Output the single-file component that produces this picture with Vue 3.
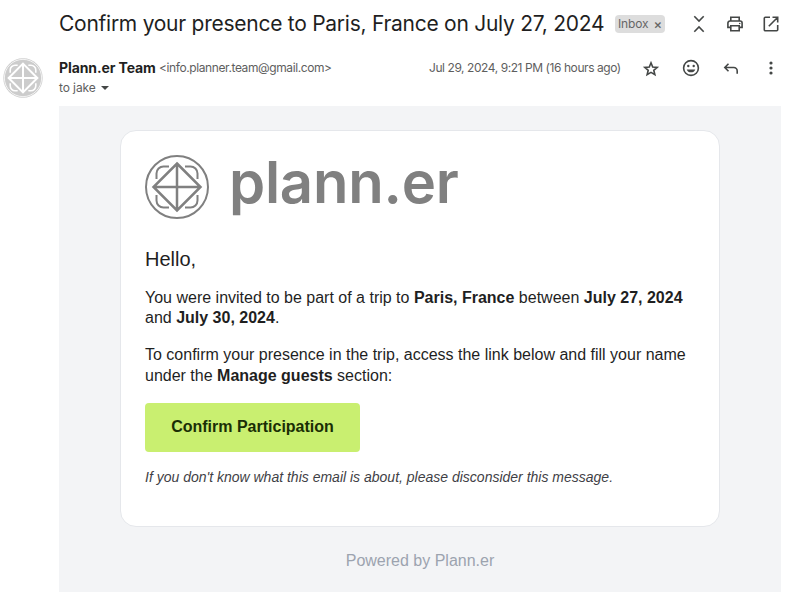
<script setup>
const logoCorners = [0, 90, 180, 270]
</script>

<template>
  <main class="mail">
    <header class="subject">
      <h1>Confirm your presence to Paris, France on July 27, 2024</h1>
      <span class="label">Inbox <b>×</b></span>
      <nav class="tools">
        <svg viewBox="0 0 20 20"><path d="M5.3 2.3 10 7l4.7-4.7M5.3 17.7 10 13l4.7 4.7" /></svg>
        <svg viewBox="0 0 20 20"><path d="M5.8 7V3.3h8.4V7M5.8 13.4H2.9V9a2 2 0 0 1 2-2h10.2a2 2 0 0 1 2 2v4.400h-2.900M5.800 11.700h8.400v5h-8.400z" /><circle class="solid" cx="14.700" cy="9.500" r=".8" /></svg>
        <svg viewBox="0 0 20 20"><path d="M9 3.300H4.300a1 1 0 0 0-1 1v11.400a1 1 0 0 0 1 1h11.400a1 1 0 0 0 1-1V11M11.500 3.300h5.200v5.200M16.500 3.500l-8.700 8.700" /></svg>
      </nav>
    </header>

    <section class="sender">
      <svg class="avatar" viewBox="-32 -32 64 64">
        <circle class="disc" r="31.500" />
        <circle class="ring" r="29.800" />
        <path class="mark" d="M0-23 23 0 0 23-23 0zM0-23V23M-23 0H23" />
        <path v-for="a in logoCorners" :key="a" class="mark thin" :transform="`rotate(${a})`" d="M-20.500-8.500v-4a8 8 0 0 1 8-8h4" />
      </svg>
      <div class="who">
        <div class="from"><strong>Plann.er Team</strong><span>&lt;info.planner.team@gmail.com&gt;</span></div>
        <div class="to"><span>to jake</span><i></i></div>
      </div>
      <time>Jul 29, 2024, 9:21 PM (16 hours ago)</time>
      <nav class="actions">
        <svg viewBox="0 0 20 20"><path d="m10 4.800 1.700 4.150 4.500.4-3.400 2.950 1.050 4.400L10 14.400l-3.850 2.300L7.200 12.300 3.800 9.350l4.500-.4z" /></svg>
        <svg viewBox="0 0 20 20"><circle cx="10" cy="10" r="7.400" /><circle class="solid" cx="7.300" cy="8" r="1.200" /><circle class="solid" cx="12.700" cy="8" r="1.200" /><path class="solid" d="M5.700 11.400h8.600a4.600 4.600 0 0 1-8.600 0z" /></svg>
        <svg viewBox="0 0 20 20"><path d="M7.500 5.800 3.800 9.500l3.700 3.700M3.800 9.500h9a3.400 3.400 0 0 1 3.400 3.400v2.800" /></svg>
        <svg viewBox="0 0 20 20"><circle class="solid" cx="10" cy="5" r="1.600" /><circle class="solid" cx="10" cy="10" r="1.600" /><circle class="solid" cx="10" cy="15" r="1.600" /></svg>
      </nav>
    </section>

    <section class="canvas">
      <article class="card">
        <div class="brand">
          <svg viewBox="-32 -32 64 64">
            <circle r="31" />
            <path class="frame" d="M0-23.500 23.500 0 0 23.500-23.500 0zM0-23.500V23.500M-23.500 0H23.500" />
            <path v-for="a in logoCorners" :key="a" :transform="`rotate(${a})`" d="M-20.500-8v-5.500a7 7 0 0 1 7-7H-8" />
          </svg>
          <span>plann.er</span>
        </div>
        <h2>Hello,</h2>
        <p class="first">You were invited to be part of a trip to <b>Paris, France</b> between <b>July 27, 2024</b><br>and <b>July 30, 2024</b>.</p>
        <p class="second">To confirm your presence in the trip, access the link below and fill your name<br>under the <b>Manage guests</b> section:</p>
        <a class="button">Confirm Participation</a>
        <p class="note">If you don't know what this email is about, please disconsider this message.</p>
      </article>
      <footer>Powered by Plann.er</footer>
    </section>
  </main>
</template>

<style>
body { margin: 0; background: #fff; }
</style>

<style scoped>
.mail {
  width: 787px;
  height: 599px;
  overflow: hidden;
  box-sizing: border-box;
  background: #fff;
  color: #1f1f1f;
  font-family: Inter, "Liberation Sans", sans-serif;
}
.subject { display: flex; align-items: center; height: 48px; padding-left: 59px; }
h1 { flex: none; width: 556px; margin: 0; font-size: 21px; font-weight: 400; line-height: 28px; letter-spacing: -.26px; white-space: nowrap; }
.label {
  display: flex; align-items: center; justify-content: center; gap: 5px; width: 50px; height: 18px;
  border-radius: 4px; background: #ddd; color: #666; font-size: 12px; line-height: 18px; letter-spacing: -.1px;
}
.label b { font-weight: 500; font-size: 13px; }
svg { display: block; flex: none; fill: none; }
.tools, .actions { display: flex; }
.tools { gap: 16px; margin-left: 24px; }
.tools svg, .actions svg { width: 20px; height: 20px; stroke: #444746; stroke-width: 1.600; }
.tools .solid, .actions .solid { fill: #444746; stroke: none; }
.sender { display: flex; height: 58px; padding-left: 3px; box-sizing: border-box; }
.avatar { width: 40px; height: 40px; margin-top: 10px; }
.disc { fill: #ccc; }
.ring { stroke: #fff; stroke-width: 1.200; }
.mark { stroke: #fff; stroke-width: 3.200; }
.mark.thin { stroke-width: 2.500; }
.who { width: 370px; padding: 10px 0 0 16px; box-sizing: border-box; white-space: nowrap; }
.from { display: flex; align-items: center; height: 20px; }
.from strong { width: 100px; font-size: 14px; font-weight: 700; letter-spacing: -.1px; line-height: 20px; }
.from span, .to, time { color: #5e5e5e; font-size: 12px; }
.from span { margin-top: -2px; letter-spacing: -.4px; }
.to { display: flex; align-items: center; gap: 5px; height: 19px; letter-spacing: -.1px; }
.to i { border: 4.500px solid transparent; border-top-color: #444746; border-bottom: 0; }
time { width: 212px; height: 20px; margin: 10px 0 0 16px; line-height: 20px; letter-spacing: -.43px; white-space: nowrap; }
.actions { gap: 20px; margin-top: 10px; }
.canvas { width: 722px; height: 486px; margin-left: 59px; padding-top: 24px; box-sizing: border-box; background: #f3f4f6; font-family: "Liberation Sans", Arial, sans-serif; }
.card { width: 600px; height: 397px; margin-left: 61px; padding: 24px; box-sizing: border-box; border: 1px solid #e5e7eb; border-radius: 16px; background: #fff; }
.brand { display: flex; height: 64px; }
.brand svg { width: 64px; height: 64px; stroke: #808080; stroke-width: 2; }
.brand .frame { stroke-width: 2.500; }
.brand span { margin-left: 20px; color: #808080; font: 600 58px/54px Inter, sans-serif; letter-spacing: -.250px; }
h2 { margin: 26px 0 0; font-size: 20px; font-weight: 400; line-height: 28px; }
p { margin: 15px 0 0; font-size: 16px; line-height: 20.500px; white-space: nowrap; }
.first { line-height: 20px; }
.second { margin-top: 17px; }
.button { display: block; width: 215px; height: 49px; margin-top: 17px; border-radius: 4px; background: #c9ef70; color: #1a2e05; font-size: 16px; font-weight: 700; line-height: 47px; text-align: center; }
.note { margin-top: 15px; font-size: 14px; font-style: italic; line-height: 20px; color: #3f3f46; }
footer { margin-top: 22px; color: #9ca3af; font-size: 16px; line-height: 24px; text-align: center; }
</style>
